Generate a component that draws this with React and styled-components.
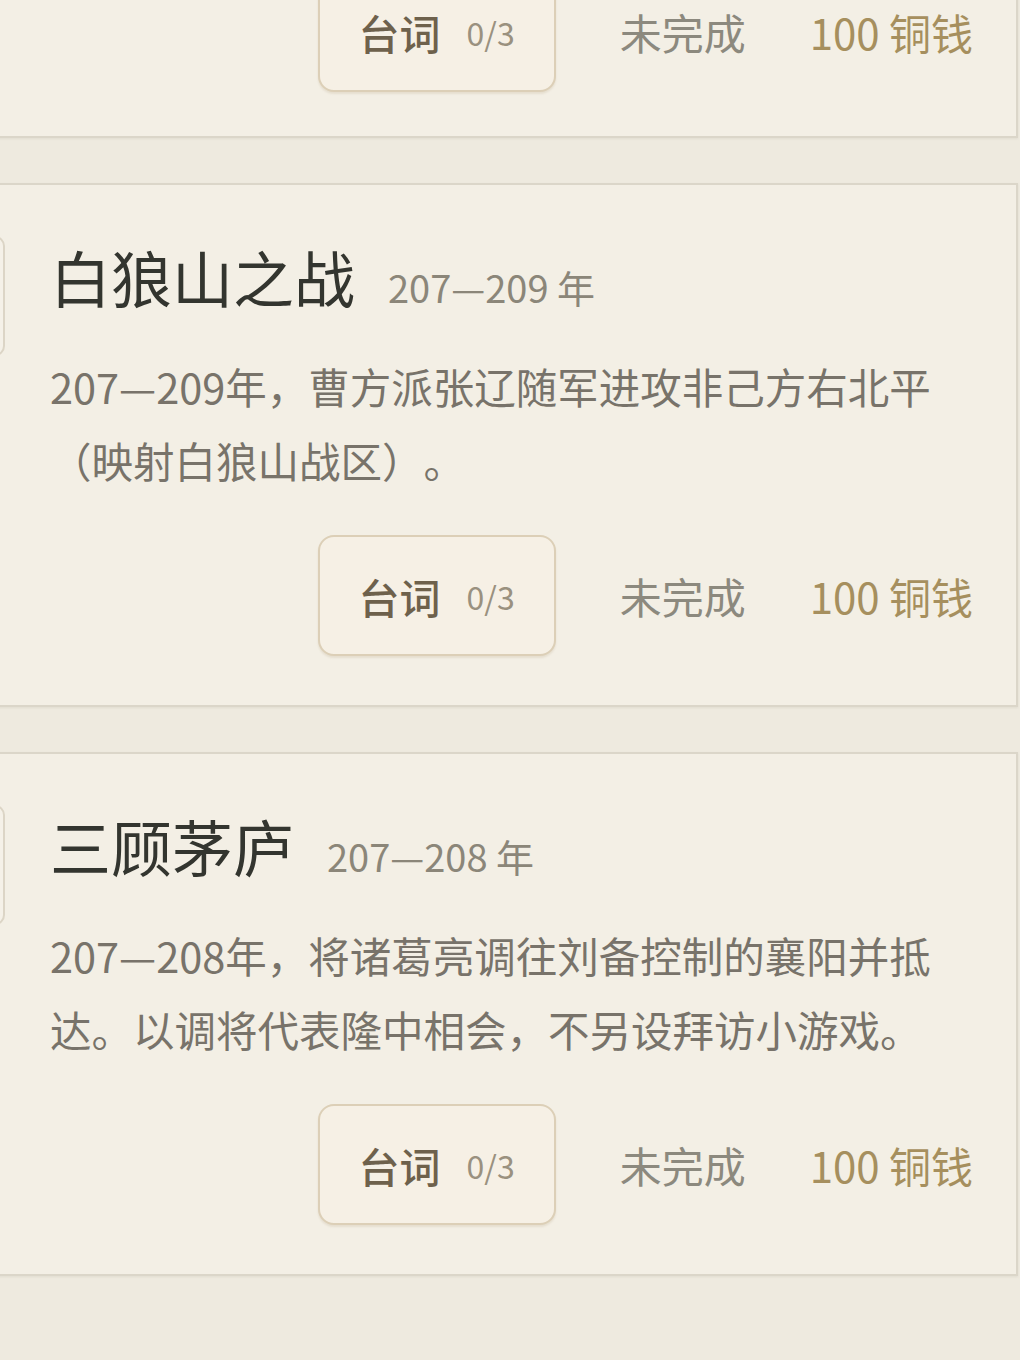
import React from "react";
import styled, { createGlobalStyle } from "styled-components";

const GlobalStyle = createGlobalStyle`
  html, body {
    margin: 0;
    padding: 0;
    background: #eeeadf;
    overflow: hidden;
  }
  body {
    font-family: "Noto Sans CJK SC", "Noto Sans", sans-serif;
    text-spacing-trim: space-all;
  }
`;

// first entry is the tail of the card scrolled above the viewport
const events = [
  { id: "prev" },
  {
    id: "bailang",
    title: "白狼山之战",
    years: "207—209 年",
    desc: "207—209年，曹方派张辽随军进攻非己方右北平（映射白狼山战区）。",
  },
  {
    id: "sangu",
    title: "三顾茅庐",
    years: "207—208 年",
    desc: "207—208年，将诸葛亮调往刘备控制的襄阳并抵达。以调将代表隆中相会，不另设拜访小游戏。",
  },
];

function App() {
  return (
    <>
      <GlobalStyle />
      <Page>
        <List>
          {events.map((ev) => (
            <Card key={ev.id} $compact={!ev.title}>
              <Tab $hidden={!ev.title} />
              <Body>
                {ev.title && (
                  <>
                    <TitleRow>
                      <Title>{ev.title}</Title>
                      <Years>{ev.years}</Years>
                    </TitleRow>
                    <Desc>{ev.desc}</Desc>
                  </>
                )}
                <Footer $compact={!ev.title}>
                  <LinesButton>
                    <span className="label">台词</span>
                    <span className="count">0/3</span>
                  </LinesButton>
                  <Status>未完成</Status>
                  <Reward>100 铜钱</Reward>
                </Footer>
              </Body>
            </Card>
          ))}
        </List>
      </Page>
    </>
  );
}

const Page = styled.div`
  width: 1020px;
  height: 1360px;
  overflow: hidden;
  background: #eeeadf;
`;

const List = styled.div`
  display: flex;
  flex-direction: column;
  gap: 45px;
  width: 1078px;
  margin-top: -87px;
  margin-left: -60px;
`;

const Card = styled.div`
  display: flex;
  align-items: flex-start;
  gap: 45px;
  padding: 0 43px ${(p) => (p.$compact ? "44px" : "49px")} 23px;
  border: 2px solid #dbd6c9;
  background: #f3efe5;
  box-shadow: 0 1px 2px rgba(150, 140, 120, 0.15);
`;

const Tab = styled.div`
  flex: 0 0 40px;
  height: 120px;
  margin-top: 51px;
  border: 2px solid #dcd5c6;
  border-radius: 10px;
  background: #f5f1e8;
  box-sizing: border-box;
  visibility: ${(p) => (p.$hidden ? "hidden" : "visible")};
`;

const Body = styled.div`
  flex: 1;
  display: flex;
  flex-direction: column;
  padding-top: 56px;
`;

const TitleRow = styled.div`
  display: flex;
  align-items: baseline;
  gap: 33px;
`;

const Title = styled.h2`
  margin: 0;
  font-size: 61px;
  line-height: 72px;
  font-weight: 400;
  color: #33352f;
`;

const Years = styled.span`
  font-size: 38px;
  color: #8b8679;
`;

const Desc = styled.p`
  margin: 35px 0 0;
  max-width: 912px;
  font-size: 41.5px;
  line-height: 74px;
  color: #78736a;
`;

const Footer = styled.div`
  display: flex;
  justify-content: flex-end;
  align-items: center;
  gap: 64px;
  margin-top: ${(p) => (p.$compact ? "0" : "38px")};
  line-height: 48px;
`;

const LinesButton = styled.div`
  display: flex;
  align-items: center;
  justify-content: center;
  gap: 26px;
  width: 238px;
  height: 121px;
  box-sizing: border-box;
  border: 2px solid #dccfb7;
  border-radius: 16px;
  background: #f6f0e5;
  box-shadow: 0 2px 2px rgba(170, 150, 110, 0.18);

  .label {
    font-size: 41px;
    font-weight: 500;
    color: #6e614c;
  }
  .count {
    font-size: 32px;
    color: #9a917f;
  }
`;

const Status = styled.span`
  font-size: 42px;
  color: #8c897e;
`;

const Reward = styled.span`
  font-size: 42px;
  color: #a68f5e;
`;

export default App;
